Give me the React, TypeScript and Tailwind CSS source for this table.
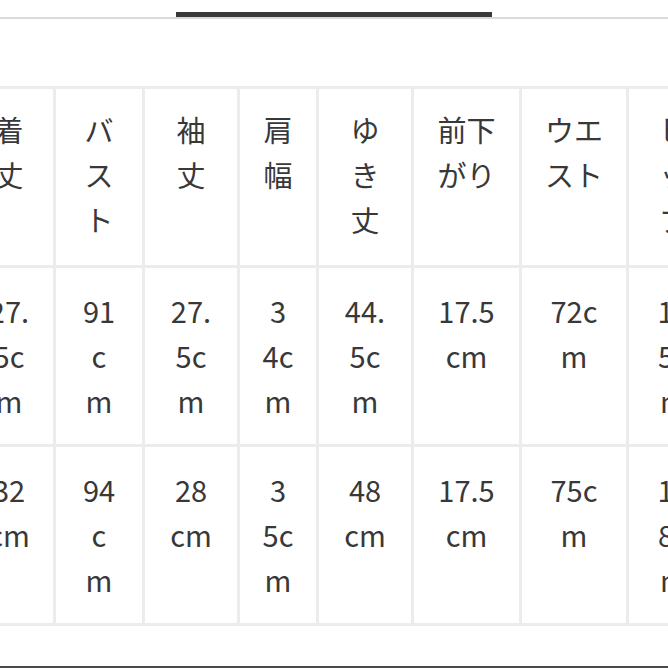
import React from "react";

const widths = [88, 86, 92, 76, 92, 105, 104, 89];

const header: string[][] = [
  ["着", "丈"],
  ["バ", "ス", "ト"],
  ["袖", "丈"],
  ["肩", "幅"],
  ["ゆ", "き", "丈"],
  ["前下", "がり"],
  ["ウエ", "スト"],
  ["ヒ", "ッ", "プ"],
];

const rows: string[][][] = [
  [
    ["27.", "5c", "m"],
    ["91", "c", "m"],
    ["27.", "5c", "m"],
    ["3", "4c", "m"],
    ["44.", "5c", "m"],
    ["17.5", "cm"],
    ["72c", "m"],
    ["10", "5c", "m"],
  ],
  [
    ["32", "cm"],
    ["94", "c", "m"],
    ["28", "cm"],
    ["3", "5c", "m"],
    ["48", "cm"],
    ["17.5", "cm"],
    ["75c", "m"],
    ["10", "8c", "m"],
  ],
];

function Cell({ lines, header }: { lines: string[]; header?: boolean }) {
  return (
    <div
      className={`bg-white h-[176px] flex flex-col items-center text-[29px] leading-[45px] text-[#383838] whitespace-nowrap ${
        header ? "pt-[18px]" : "pt-[20px]"
      }`}
    >
      {lines.map((l, i) => (
        <div key={i}>{l}</div>
      ))}
    </div>
  );
}

export default function App() {
  return (
    <div
      className="w-[668px] h-[668px] overflow-hidden bg-white flex flex-col"
      style={{ fontFamily: '"Noto Sans CJK JP", "Noto Sans", sans-serif' }}
    >
      <div className="pt-[12px]">
        <div className="ml-[176px] w-[316px] h-[5px] bg-[#393939]" />
        <div className="h-[2px] bg-[#dadada]" />
      </div>
      <div className="mt-[67px] ml-[-35px] w-max">
        <div
          className="grid gap-[3px] py-[3px] bg-[#ececec]"
          style={{ gridTemplateColumns: widths.map((w) => `${w}px`).join(" ") }}
        >
          {header.map((h, i) => (
            <Cell key={`h${i}`} lines={h} header />
          ))}
          {rows.map((r, ri) =>
            r.map((c, ci) => <Cell key={`r${ri}-${ci}`} lines={c} />)
          )}
        </div>
      </div>
      <div className="mt-[40px] h-[2px] bg-[#4a4a4a]" />
    </div>
  );
}
